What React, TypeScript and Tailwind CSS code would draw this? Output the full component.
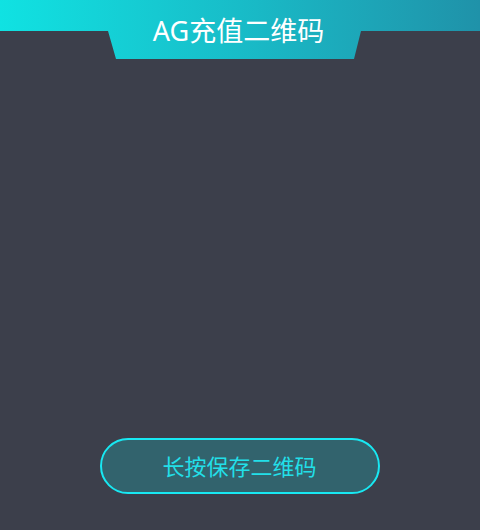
export default function App() {
    return (
        <div className="relative w-[480px] h-[530px] bg-[#3c3f4b] overflow-hidden font-['Noto_Sans','Noto_Sans_CJK_SC',sans-serif]">
            <header className="h-[59px] bg-gradient-to-r from-[#10e2e2] via-[#18bcc8] to-[#1f92a9] [clip-path:polygon(0_0,100%_0,100%_31px,361px_31px,354px_59px,116px_59px,108px_31px,0_31px)] flex justify-center">
                <h1 className="text-white text-[27px] leading-none mt-[17px] ml-[-3px]">AG充值二维码</h1>
            </header>
            <div className="flex justify-center pt-[379px]">
                <button className="w-[280px] h-[56px] rounded-full border-2 border-[#18e8f2] bg-[#32636d] text-[#22dfe8] text-[22px] ml-[-1px]">
                    长按保存二维码
                </button>
            </div>
        </div>
    )
}
